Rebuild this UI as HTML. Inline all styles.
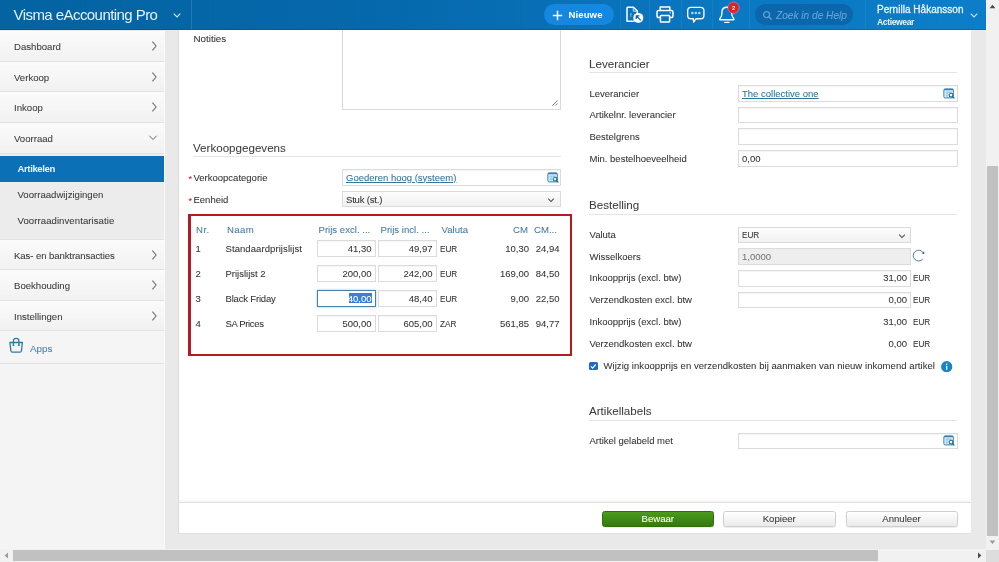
<!DOCTYPE html>
<html>
<head>
<meta charset="utf-8">
<title>Visma eAccounting Pro</title>
<style>
*{box-sizing:border-box;margin:0;padding:0}
html,body{width:999px;height:562px;overflow:hidden;background:#e9e9e9;font-family:"Liberation Sans",sans-serif;font-size:9.5px;color:#343434;-webkit-text-stroke:0.07px currentColor}
.a{position:absolute}
#content,#side,#hdr{will-change:transform}
.t{position:absolute;white-space:nowrap;line-height:12px;height:12px}
/* header */
#hdr{left:0;top:0;width:986px;height:30px;background:linear-gradient(90deg,#0463a1 0%,#0669ad 40%,#0a78c2 75%,#0c7ec9 100%);border-bottom:1px solid rgba(0,40,80,.22)}
.vd{position:absolute;top:0;width:1px;height:29px;background:rgba(255,255,255,.055)}
/* sidebar */
#side{left:0;top:30.6px;width:164.5px;height:518.4px;background:#f4f4f4;border-right:1px solid #fafafa;overflow:hidden}
.mi{position:absolute;left:0;width:165px;height:30.5px;background:linear-gradient(#fbfbfb,#f1f1f1);border-bottom:1px solid #e2e2e2}
.mi span{position:absolute;left:14px;top:10.1px;line-height:12px;font-size:9.6px;color:#3c3c3c;white-space:nowrap}
.mi svg{position:absolute;right:6.8px;top:9.4px}
.sub{position:absolute;left:0;width:165px;height:26px}
.sub span{position:absolute;left:17.5px;top:6.8px;line-height:12px;font-size:9.6px;color:#3c3c3c;white-space:nowrap}
/* content */
#panel{left:178px;top:30px;width:793px;height:504.3px;background:#fff;border-left:1px solid #dcdcdc;border-bottom:1px solid #e0e0e0}
.h{position:absolute;white-space:nowrap;font-size:11.6px;line-height:14px;color:#3d3d3d;-webkit-text-stroke:0.05px}
.hl{position:absolute;height:1px;background:#e5e5e5}
.in{position:absolute;height:16.7px;border:1px solid #dbdbdb;background:#fff;box-shadow:inset 0 1px 1px rgba(0,0,0,.04)}
.sel{position:absolute;height:16.4px;border:1px solid #dbdbdb;background:linear-gradient(#fdfdfd,#f1f1f1)}
.lnk{color:#33749a;text-decoration:underline;text-decoration-thickness:0.8px}
.th{color:#467ba4;font-size:9.6px}
.r{text-align:right}
.btn{position:absolute;top:511px;height:16px;border:1px solid #cfcfcf;border-radius:2.5px;background:linear-gradient(#ffffff,#eaeaea);text-align:center;line-height:14px;font-size:9.6px;color:#3a3a3a;box-shadow:0 1px 1px rgba(0,0,0,.08)}
</style>
</head>
<body>
<!-- gray band + scrollbars -->
<div class="a" style="left:165px;top:30px;width:14px;height:519px;background:#e9e9e9"></div>
<div class="a" style="left:971px;top:30px;width:15px;height:519px;background:#e9e9e9"></div>
<div class="a" style="left:179px;top:534px;width:792px;height:15px;background:#e9e9e9"></div>

<div id="panel" class="a"></div>
<div id="content" class="a" style="left:0;top:0;width:999px;height:562px">
<div class="t " style="left:193.5px;top:32.5px;font-size:9.8px">Notities</div>
<div class="a" style="left:342px;top:20px;width:219px;height:89.5px;border:1px solid #dadada;background:#fff"></div>
<svg class="a" style="left:550.6px;top:99.1px" width="8" height="8" viewBox="0 0 8 8"><path d="M1.5 6.5 L6.5 1.5 M4.4 6.5 L6.5 4.4" stroke="#6a6a6a" stroke-width="0.9"/></svg>
<div class="h" style="left:193px;top:140.5px">Verkoopgegevens</div>
<div class="hl" style="left:193px;top:156px;width:368px"></div>
<div class="t " style="left:193.5px;top:171.5px;"><span style="color:#c8242b;position:absolute;left:-5px;top:1px;font-size:9px">*</span>Verkoopcategorie</div>
<div class="t " style="left:193.5px;top:193.5px;"><span style="color:#c8242b;position:absolute;left:-5px;top:1px;font-size:9px">*</span>Eenheid</div>
<div class="in" style="left:342px;top:169px;width:219px"></div>
<div class="t " style="left:346px;top:171.5px;"><span class="lnk">Goederen hoog (systeem)</span></div>
<svg class="a" style="left:546.6px;top:172.1px" width="12" height="11" viewBox="0 0 12 11"><rect x="0.9" y="0.9" width="9.4" height="9" rx="1.2" fill="#f3fafe" stroke="#2a7aad" stroke-width="1"/><path d="M1.2 1.7 H10" stroke="#2a7aad" stroke-width="1.2"/><path d="M2.5 4.1 H8.7 M2.5 6 H5.2 M2.5 7.9 H5.2" stroke="#5ab6e8" stroke-width="1"/><circle cx="8" cy="7.1" r="1.9" fill="#f4fbff" stroke="#1d628f" stroke-width="1.05"/><path d="M9.5 8.6 L11 10.1" stroke="#1d628f" stroke-width="1.2" stroke-linecap="round"/></svg>
<div class="sel" style="left:342px;top:191px;width:219px"></div>
<div class="t " style="left:346px;top:193.5px;letter-spacing:-0.18px">Stuk (st.)</div>
<svg class="a" style="left:546.4px;top:196.7px" width="10" height="7" viewBox="0 0 10 7"><path d="M2.2 1.7 L5 4.5 L7.8 1.7" fill="none" stroke="#4a4a4a" stroke-width="1.05"/></svg>
<div class="a" style="left:188px;top:213.9px;width:384.3px;height:142.2px;border:solid #b51a20;border-width:2.5px 2.4px 2.4px 3px"></div>
<div class="t th" style="left:196px;top:223.5px;letter-spacing:0.5px">Nr.</div>
<div class="t th" style="left:227px;top:223.5px;letter-spacing:0.4px">Naam</div>
<div class="t th" style="left:318.5px;top:223.5px;">Prijs excl. ...</div>
<div class="t th" style="left:380.5px;top:223.5px;">Prijs incl. ...</div>
<div class="t th" style="left:441.5px;top:223.5px;">Valuta</div>
<div class="t r th" style="right:471px;top:223.5px;">CM</div>
<div class="t th" style="left:534px;top:223.5px;">CM...</div>
<div class="t " style="left:195.5px;top:242.5px;">1</div>
<div class="t " style="left:225.5px;top:242.5px;letter-spacing:0.08px">Standaardprijslijst</div>
<div class="in" style="left:317px;top:240.0px;width:59px"></div>
<div class="t r " style="right:627.5px;top:242.5px;">41,30</div>
<div class="in" style="left:378px;top:240.0px;width:59px"></div>
<div class="t r " style="right:566.5px;top:242.5px;">49,97</div>
<div class="t " style="left:440px;top:242.5px;transform:scaleX(.86);transform-origin:0 50%">EUR</div>
<div class="t r " style="right:470px;top:242.5px;">10,30</div>
<div class="t r " style="right:439.5px;top:242.5px;">24,94</div>
<div class="t " style="left:195.5px;top:267.5px;">2</div>
<div class="t " style="left:225.5px;top:267.5px;">Prijslijst 2</div>
<div class="in" style="left:317px;top:265.0px;width:59px"></div>
<div class="t r " style="right:627.5px;top:267.5px;">200,00</div>
<div class="in" style="left:378px;top:265.0px;width:59px"></div>
<div class="t r " style="right:566.5px;top:267.5px;">242,00</div>
<div class="t " style="left:440px;top:267.5px;transform:scaleX(.86);transform-origin:0 50%">EUR</div>
<div class="t r " style="right:470px;top:267.5px;">169,00</div>
<div class="t r " style="right:439.5px;top:267.5px;">84,50</div>
<div class="t " style="left:195.5px;top:292.5px;">3</div>
<div class="t " style="left:225.5px;top:292.5px;letter-spacing:-0.18px">Black Friday</div>
<div class="in" style="left:317px;top:290.0px;width:59px;border:1.4px solid #4a7fa6;box-shadow:0 0 2.5px rgba(120,180,230,.7)"></div>
<div class="a" style="left:348.6px;top:292.6px;width:23.3px;height:10.9px;background:#3a80d8"></div>
<div class="t r " style="right:627.5px;top:292.5px;color:#fff">40,00</div>
<div class="in" style="left:378px;top:290.0px;width:59px"></div>
<div class="t r " style="right:566.5px;top:292.5px;">48,40</div>
<div class="t " style="left:440px;top:292.5px;transform:scaleX(.86);transform-origin:0 50%">EUR</div>
<div class="t r " style="right:470px;top:292.5px;">9,00</div>
<div class="t r " style="right:439.5px;top:292.5px;">22,50</div>
<div class="t " style="left:195.5px;top:317.5px;">4</div>
<div class="t " style="left:225.5px;top:317.5px;letter-spacing:-0.35px">SA Prices</div>
<div class="in" style="left:317px;top:315.0px;width:59px"></div>
<div class="t r " style="right:627.5px;top:317.5px;">500,00</div>
<div class="in" style="left:378px;top:315.0px;width:59px"></div>
<div class="t r " style="right:566.5px;top:317.5px;">605,00</div>
<div class="t " style="left:440px;top:317.5px;transform:scaleX(.86);transform-origin:0 50%">ZAR</div>
<div class="t r " style="right:470px;top:317.5px;">561,85</div>
<div class="t r " style="right:439.5px;top:317.5px;">94,77</div>
<div class="h" style="left:589px;top:56.5px">Leverancier</div>
<div class="hl" style="left:589px;top:72px;width:368px"></div>
<div class="t " style="left:589.5px;top:87.5px;">Leverancier</div>
<div class="in" style="left:737.5px;top:85.0px;width:220px"></div>
<div class="t " style="left:589.5px;top:109.2px;">Artikelnr. leverancier</div>
<div class="in" style="left:737.5px;top:106.7px;width:220px"></div>
<div class="t " style="left:589.5px;top:130.9px;">Bestelgrens</div>
<div class="in" style="left:737.5px;top:128.4px;width:220px"></div>
<div class="t " style="left:589.5px;top:152.6px;">Min. bestelhoeveelheid</div>
<div class="in" style="left:737.5px;top:150.1px;width:220px"></div>
<div class="t " style="left:742px;top:87.5px;"><span class="lnk">The collective one</span></div>
<svg class="a" style="left:942.6px;top:88.1px" width="12" height="11" viewBox="0 0 12 11"><rect x="0.9" y="0.9" width="9.4" height="9" rx="1.2" fill="#f3fafe" stroke="#2a7aad" stroke-width="1"/><path d="M1.2 1.7 H10" stroke="#2a7aad" stroke-width="1.2"/><path d="M2.5 4.1 H8.7 M2.5 6 H5.2 M2.5 7.9 H5.2" stroke="#5ab6e8" stroke-width="1"/><circle cx="8" cy="7.1" r="1.9" fill="#f4fbff" stroke="#1d628f" stroke-width="1.05"/><path d="M9.5 8.6 L11 10.1" stroke="#1d628f" stroke-width="1.2" stroke-linecap="round"/></svg>
<div class="t " style="left:742px;top:152.6px;">0,00</div>
<div class="h" style="left:589px;top:198px">Bestelling</div>
<div class="hl" style="left:589px;top:214px;width:368px"></div>
<div class="t " style="left:589.5px;top:229px;">Valuta</div>
<div class="t " style="left:589.5px;top:250.7px;">Wisselkoers</div>
<div class="t " style="left:589.5px;top:272.4px;">Inkoopprijs (excl. btw)</div>
<div class="t " style="left:589.5px;top:294.1px;">Verzendkosten excl. btw</div>
<div class="t " style="left:589.5px;top:316.3px;">Inkoopprijs (excl. btw)</div>
<div class="t " style="left:589.5px;top:337.7px;">Verzendkosten excl. btw</div>
<div class="sel" style="left:737.5px;top:226.5px;width:173.5px"></div>
<div class="t " style="left:742px;top:229px;transform:scaleX(.86);transform-origin:0 50%">EUR</div>
<svg class="a" style="left:896.8px;top:233px" width="10" height="7" viewBox="0 0 10 7"><path d="M2.2 1.7 L5 4.5 L7.8 1.7" fill="none" stroke="#4a4a4a" stroke-width="1.05"/></svg>
<div class="in" style="left:737.5px;top:248.2px;width:173.5px;background:#eee;box-shadow:none"></div>
<div class="t " style="left:742px;top:250.7px;color:#777">1,0000</div>
<svg class="a" style="left:912px;top:249px" width="14" height="14" viewBox="0 0 14 14"><path d="M11.28 3.9 A5.4 5.4 0 1 0 10.74 10.07" fill="none" stroke="#4d7d92" stroke-width="1"/><path d="M12.3 2.3 L12.2 5.2 L9.6 4.2 Z" fill="#3d6d82"/></svg>
<div class="in" style="left:737.5px;top:269.9px;width:173.5px"></div>
<div class="t r " style="right:92px;top:272.4px;">31,00</div>
<div class="t " style="left:913px;top:272.4px;transform:scaleX(.86);transform-origin:0 50%">EUR</div>
<div class="in" style="left:737.5px;top:291.6px;width:173.5px"></div>
<div class="t r " style="right:92px;top:294.1px;">0,00</div>
<div class="t " style="left:913px;top:294.1px;transform:scaleX(.86);transform-origin:0 50%">EUR</div>
<div class="t r " style="right:92px;top:316.3px;">31,00</div>
<div class="t " style="left:913px;top:316.3px;transform:scaleX(.86);transform-origin:0 50%">EUR</div>
<div class="t r " style="right:92px;top:337.7px;">0,00</div>
<div class="t " style="left:913px;top:337.7px;transform:scaleX(.86);transform-origin:0 50%">EUR</div>
<div class="a" style="left:589px;top:361.9px;width:8.8px;height:8.3px;border-radius:1.5px;background:#1b6bcb"></div>
<svg class="a" style="left:589.1px;top:361.7px" width="8.6" height="8.6" viewBox="0 0 9 9"><path d="M2 4.6 L3.8 6.4 L7 2.6" fill="none" stroke="#fff" stroke-width="1.3"/></svg>
<div class="t " style="left:603.5px;top:360.4px;letter-spacing:0.055px">Wijzig inkoopprijs en verzendkosten bij aanmaken van nieuw inkomend artikel</div>
<svg class="a" style="left:941.3px;top:360.7px" width="11.4" height="11.4" viewBox="0 0 11.4 11.4"><circle cx="5.7" cy="5.7" r="5.6" fill="#1a82c8"/><rect x="5.05" y="4.7" width="1.3" height="4.2" fill="#e8f6ff"/><rect x="5.05" y="2.5" width="1.3" height="1.4" fill="#e8f6ff"/></svg>
<div class="h" style="left:589px;top:403.5px">Artikellabels</div>
<div class="hl" style="left:589px;top:420px;width:368px"></div>
<div class="t " style="left:589.5px;top:435px;">Artikel gelabeld met</div>
<div class="in" style="left:737.5px;top:432.5px;width:220px"></div>
<svg class="a" style="left:942.6px;top:435.1px" width="12" height="11" viewBox="0 0 12 11"><rect x="0.9" y="0.9" width="9.4" height="9" rx="1.2" fill="#f3fafe" stroke="#2a7aad" stroke-width="1"/><path d="M1.2 1.7 H10" stroke="#2a7aad" stroke-width="1.2"/><path d="M2.5 4.1 H8.7 M2.5 6 H5.2 M2.5 7.9 H5.2" stroke="#5ab6e8" stroke-width="1"/><circle cx="8" cy="7.1" r="1.9" fill="#f4fbff" stroke="#1d628f" stroke-width="1.05"/><path d="M9.5 8.6 L11 10.1" stroke="#1d628f" stroke-width="1.2" stroke-linecap="round"/></svg>
<div class="a" style="left:179px;top:497.5px;width:792px;height:5px;background:linear-gradient(rgba(0,0,0,0),rgba(0,0,0,.045))"></div><div class="hl" style="left:179px;top:502px;width:792px;background:#dedede"></div>
<div class="btn" style="left:601.5px;width:112.5px;background:linear-gradient(#4c9a1e,#357a0c);border-color:#2f6f0a;color:#fff">Bewaar</div>
<div class="btn" style="left:723px;width:112.5px">Kopieer</div>
<div class="btn" style="left:845.5px;width:112px">Annuleer</div>
</div>
<div id="side" class="a">
  <div class="mi" style="top:0"><span>Dashboard</span><svg width="8" height="12" viewBox="0 0 8 12"><path d="M2.4 1.6 L6.1 6 L2.4 10.4" fill="none" stroke="#6e6e6e" stroke-width="1.05"/></svg></div>
  <div class="mi" style="top:30.5px"><span>Verkoop</span><svg width="8" height="12" viewBox="0 0 8 12"><path d="M2.4 1.6 L6.1 6 L2.4 10.4" fill="none" stroke="#6e6e6e" stroke-width="1.05"/></svg></div>
  <div class="mi" style="top:61px"><span>Inkoop</span><svg width="8" height="12" viewBox="0 0 8 12"><path d="M2.4 1.6 L6.1 6 L2.4 10.4" fill="none" stroke="#6e6e6e" stroke-width="1.05"/></svg></div>
  <div class="mi" style="top:91.5px;height:31.5px"><span>Voorraad</span><svg width="10" height="12" viewBox="0 0 10 12" style="right:7px"><path d="M1.4 3.8 L5 7.6 L8.6 3.8" fill="none" stroke="#6a6a6a" stroke-width="1"/></svg></div>
  <div class="a" style="left:0;top:123px;width:165px;height:85px;background:#ececec"></div>
  <div class="sub" style="top:125.2px;background:#0b70b6"><span style="color:#e9f5ff;font-weight:bold;letter-spacing:-0.4px;-webkit-text-stroke:0">Artikelen</span></div>
  <div class="sub" style="top:151.2px"><span>Voorraadwijzigingen</span></div>
  <div class="sub" style="top:177.2px"><span style="letter-spacing:0.06px">Voorraadinventarisatie</span></div>
  <div class="mi" style="top:207.5px;height:31.5px;border-top:1px solid #e2e2e2"><span style="top:10px;letter-spacing:-0.1px">Kas- en banktransacties</span><svg width="8" height="12" viewBox="0 0 8 12"><path d="M2.4 1.6 L6.1 6 L2.4 10.4" fill="none" stroke="#6e6e6e" stroke-width="1.05"/></svg></div>
  <div class="mi" style="top:239px"><span>Boekhouding</span><svg width="8" height="12" viewBox="0 0 8 12"><path d="M2.4 1.6 L6.1 6 L2.4 10.4" fill="none" stroke="#6e6e6e" stroke-width="1.05"/></svg></div>
  <div class="mi" style="top:269.5px"><span>Instellingen</span><svg width="8" height="12" viewBox="0 0 8 12"><path d="M2.4 1.6 L6.1 6 L2.4 10.4" fill="none" stroke="#6e6e6e" stroke-width="1.05"/></svg></div>
  <div class="a" style="left:0;top:300px;width:165px;height:32.5px;background:#f5f5f5;border-bottom:1px solid #e2e2e2"></div>
  <svg class="a" style="left:8px;top:305.4px" width="17" height="18" viewBox="0 0 17 18">
    <path d="M1.9 6.5 H14.4 L13.4 15 Q13.2 16.2 12 16.2 H4.3 Q3.1 16.2 2.9 15 Z" fill="none" stroke="#2b7b9d" stroke-width="1.3" stroke-linejoin="round"/>
    <path d="M5.4 8.6 V5 Q5.4 2.3 8.15 2.3 Q10.9 2.3 10.9 5 V8.6" fill="none" stroke="#2b7b9d" stroke-width="1.2" stroke-linecap="round"/>
    <circle cx="5.4" cy="9.2" r="0.9" fill="#2b7b9d"/><circle cx="10.9" cy="9.2" r="0.9" fill="#2b7b9d"/>
  </svg>
  <div class="t" style="left:30px;top:311.5px;font-size:9.8px;color:#4a7fa8">Apps</div>
</div>
<div id="hdr" class="a">
  <div class="t" style="left:13.5px;top:5px;height:20px;line-height:20px;font-size:15px;color:#e6f1fa;letter-spacing:-0.56px;-webkit-text-stroke:0">Visma eAccounting Pro</div>
  <svg class="a" style="left:172px;top:12px" width="10" height="7" viewBox="0 0 10 7"><path d="M1.7 1.6 L5 4.9 L8.3 1.6" fill="none" stroke="#d5e6f5" stroke-width="1.1"/></svg>
  <div class="vd" style="left:191px;background:rgba(255,255,255,.12)"></div>
  <!-- Nieuwe -->
  <div class="a" style="left:544px;top:4.2px;width:70.3px;height:21px;border-radius:10.5px;background:#1687de"></div>
  <svg class="a" style="left:552px;top:9.5px" width="11" height="11" viewBox="0 0 11 11"><path d="M5.5 0.8 V10.2 M0.8 5.5 H10.2" stroke="#fff" stroke-width="1.5" fill="none"/></svg>
  <div class="t" style="left:568.5px;top:9.4px;font-size:9.6px;font-weight:bold;color:#fff;letter-spacing:0.08px;-webkit-text-stroke:0">Nieuwe</div>
  <div class="vd" style="left:620px"></div>
  <div class="vd" style="left:649px"></div>
  <div class="vd" style="left:681px"></div>
  <div class="vd" style="left:712px"></div>
  <div class="vd" style="left:749px"></div>
  <div class="vd" style="left:865px"></div>
  <!-- doc icon -->
  <svg class="a" style="left:625px;top:5px" width="20" height="19" viewBox="0 0 20 19">
    <path d="M2 2.2 H8.5 L12.3 6 V9 M2 2.2 V16.3 H9.5" fill="none" stroke="#fff" stroke-width="1.5" stroke-linejoin="round"/>
    <path d="M8.3 2.4 V6.2 H12" fill="none" stroke="#cfe4f6" stroke-width="1"/>
    <circle cx="13.3" cy="12.9" r="5" fill="#fff"/>
    <path d="M15.8 15.4 L11.5 11.1 M11.2 14 V10.8 H14.4" fill="none" stroke="#0a5e9a" stroke-width="1.15"/>
    <path d="M5 9 H7 M5 11 H6.5" stroke="#9cc6e8" stroke-width="1"/>
  </svg>
  <!-- printer -->
  <svg class="a" style="left:655px;top:5px" width="20" height="19" viewBox="0 0 20 19">
    <path d="M5.2 5.6 V2 H14.8 V5.6" fill="none" stroke="#fff" stroke-width="1.5" stroke-linejoin="round"/>
    <rect x="2" y="5.6" width="16" height="7" rx="1.8" fill="none" stroke="#fff" stroke-width="1.5"/>
    <rect x="5.4" y="10.4" width="9.2" height="6.6" rx="0.8" fill="#0b73ba" stroke="#fff" stroke-width="1.5"/>
    <circle cx="15.2" cy="7.9" r="0.7" fill="#fff"/>
  </svg>
  <!-- chat -->
  <svg class="a" style="left:686px;top:6px" width="20" height="18" viewBox="0 0 20 18">
    <path d="M5 1.3 H14.6 Q17.9 1.3 17.9 4.6 V9.4 Q17.9 12.7 14.6 12.7 H10.2 L7.6 16 L7.4 12.7 H5 Q1.7 12.7 1.7 9.4 V4.6 Q1.7 1.3 5 1.3 Z" fill="none" stroke="#fff" stroke-width="1.35" stroke-linejoin="round"/>
    <circle cx="6.3" cy="7" r="1.35" fill="#a9d3f1"/><circle cx="9.8" cy="7" r="1.35" fill="#a9d3f1"/><circle cx="13.3" cy="7" r="1.35" fill="#a9d3f1"/>
  </svg>
  <!-- bell -->
  <svg class="a" style="left:717px;top:1px" width="24" height="24" viewBox="0 0 24 24">
    <path d="M3.2 18.7 Q2.2 18.7 2.9 17.7 Q4.9 15.4 4.9 12.6 V11.4 Q4.9 6.2 9.8 6.2 Q14.7 6.2 14.7 11.4 V12.6 Q14.7 15.4 16.7 17.7 Q17.4 18.7 16.4 18.7 Z" fill="none" stroke="#fff" stroke-width="1.35" stroke-linejoin="round"/>
    <path d="M7.6 21.3 H12" stroke="#fff" stroke-width="1.3" stroke-linecap="round"/>
    <circle cx="16.5" cy="6.7" r="5.7" fill="#d9242b" stroke="rgba(255,255,255,.3)" stroke-width="0.9"/>
    <text x="16.5" y="8.8" font-family="Liberation Sans" font-size="5.8" font-weight="bold" fill="#ffe9e9" text-anchor="middle" style="-webkit-text-stroke:0">2</text>
  </svg>
  <!-- search -->
  <div class="a" style="left:754.5px;top:4.3px;width:98.5px;height:20.4px;border-radius:10.2px;background:#0b66ab"></div>
  <svg class="a" style="left:762px;top:10px" width="11" height="11" viewBox="0 0 11 11"><circle cx="4.6" cy="4.6" r="3" fill="none" stroke="#5f9fd2" stroke-width="1.3"/><path d="M6.8 6.8 L9.3 9.3" stroke="#5f9fd2" stroke-width="1.4" stroke-linecap="round"/></svg>
  <div class="t" style="left:776px;top:9.7px;font-size:10.15px;font-style:italic;color:#68a6d8">Zoek in de Help</div>
  <!-- user -->
  <div class="t" style="left:877px;top:4px;font-size:10px;color:#e6f5ff;letter-spacing:0.02px;-webkit-text-stroke:0.3px #e6f5ff">Pernilla Håkansson</div>
  <div class="t" style="left:877px;top:16px;font-size:8.6px;font-weight:bold;color:#e6f5ff;letter-spacing:-0.4px;-webkit-text-stroke:0">Actiewear</div>
  <svg class="a" style="left:969px;top:12px" width="10" height="7" viewBox="0 0 10 7"><path d="M1.7 1.6 L5 4.9 L8.3 1.6" fill="none" stroke="#cfe4f6" stroke-width="1.1"/></svg>
</div>
<!-- scrollbars -->
<div class="a" style="left:986px;top:0;width:13px;height:549.5px;background:#f1f1f1"></div>
<div class="a" style="left:0;top:549px;width:986px;height:13px;background:#f1f1f1"></div>
<div class="a" style="left:986px;top:549.5px;width:13px;height:12.5px;background:#dddddd"></div>
<div class="a" style="left:987.2px;top:165.5px;width:10.6px;height:370px;background:#c1c1c1"></div>
<div class="a" style="left:13px;top:550px;width:864.5px;height:10.7px;background:#c1c1c1"></div>
<svg class="a" style="left:986px;top:0" width="13" height="13" viewBox="0 0 13 13"><path d="M3.6 8.2 L6.5 4.8 L9.4 8.2 Z" fill="#4a4a4a"/></svg>
<svg class="a" style="left:986px;top:535.5px" width="13" height="13" viewBox="0 0 13 13"><path d="M3.6 4.6 L6.5 8 L9.4 4.6 Z" fill="#9a9a9a"/></svg>
<svg class="a" style="left:0;top:549px" width="13" height="13" viewBox="0 0 13 13"><path d="M8 3.4 L4.6 6.4 L8 9.4 Z" fill="#9a9a9a"/></svg>
<svg class="a" style="left:973px;top:549px" width="13" height="13" viewBox="0 0 13 13"><path d="M5 3.4 L8.4 6.4 L5 9.4 Z" fill="#4a4a4a"/></svg>
</body>
</html>
